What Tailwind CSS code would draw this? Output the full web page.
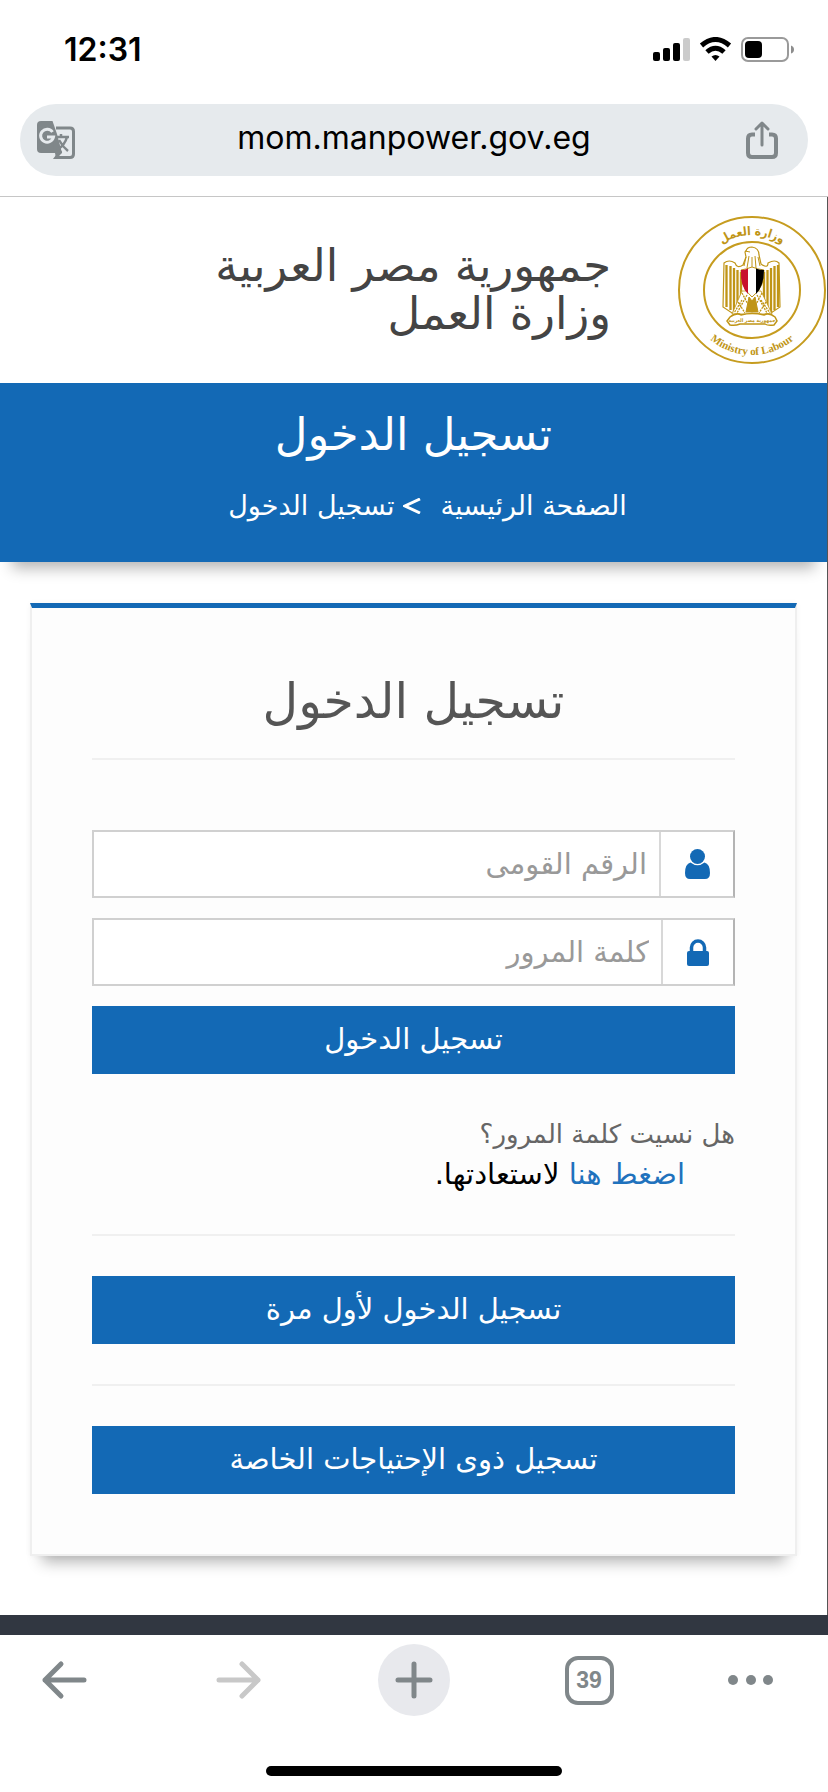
<!DOCTYPE html>
<html lang="ar">
<head>
<meta charset="utf-8">
<meta name="viewport" content="width=device-width, initial-scale=1">
<title>تسجيل الدخول</title>
<script src="https://cdn.jsdelivr.net/npm/@tailwindcss/browser@4"></script>
</head>
<body class="flex min-h-screen flex-col bg-white font-['Inter','DejaVu_Sans',sans-serif] text-black">

<!-- Status bar -->
<div class="flex h-[104px] items-center justify-between pr-8 pb-1 pl-16">
  <time class="text-[32px] leading-10 font-semibold">12:31</time>
  <svg class="h-[26px] w-[144px]" viewBox="0 0 144 26" aria-label="Signal, Wi-Fi, battery">
    <rect x="1" y="15" width="7" height="9" rx="2"/>
    <rect x="11" y="11" width="7" height="13" rx="2"/>
    <rect x="21" y="6" width="7" height="18" rx="2"/>
    <rect x="31" y="1" width="7" height="23" rx="2" fill="#cbcbcb"/>
    <path d="M49.500 8.500Q63.500-3.500 77.500 8.500" fill="none" stroke="#000" stroke-width="5"/>
    <path d="M55 15Q63.500 7.500 72 15" fill="none" stroke="#000" stroke-width="5"/>
    <path d="M59.500 19.500Q63.500 16.500 67.500 19.500L63.500 24Z"/>
    <rect x="90" y="1" width="46" height="23" rx="6" fill="none" stroke="#9a9a9a" stroke-width="2"/>
    <rect x="93" y="4" width="17" height="17" rx="4"/>
    <path d="M139 8.500Q142 9.500 142 12.500T139 16.500Z" fill="#8d8d8d"/>
  </svg>
</div>

<!-- Address bar -->
<div class="border-b border-[#c6c6c6] px-5 pb-5">
  <div class="flex h-[72px] items-center rounded-full bg-[#e6eaed] pr-[28px] pl-[16px]">
    <button type="button" aria-label="Translate">
      <svg class="size-10" viewBox="0 0 40 40">
        <path d="M5 1H16.500L21 14L26 33H5Q1 33 1 29V5Q1 1 5 1Z" fill="#80878a"/>
        <path d="M20 8H34Q37.500 8 37.500 11.500V34Q37.500 37.500 34 37.500H20L25 31" fill="none" stroke="#80878a" stroke-width="3"/>
        <path d="M18 9L26 33L20 38L19 33H17Z" fill="#80878a"/>
        <path d="M16.500 12A6.500 6.500 0 1 0 17.500 17H11" fill="none" stroke="#e6eaed" stroke-width="3"/>
        <path d="M20 17H33M25 14V17M31 17Q29 25 21 30M23 20Q27 27 32 31" fill="none" stroke="#80878a" stroke-width="2.500"/>
      </svg>
    </button>
    <span class="flex-1 pb-1 pl-2 text-center text-[32px] leading-10">mom.manpower.gov.eg</span>
    <button type="button" aria-label="Share">
      <svg class="h-10 w-[36px]" viewBox="0 0 36 40" fill="none" stroke="#80878a" stroke-width="4" stroke-linecap="round" stroke-linejoin="round">
        <path d="M11 14.500H8Q4 14.500 4 18.500V33Q4 37 8 37H28Q32 37 32 33V18.500Q32 14.500 28 14.500H25" stroke-linecap="butt"/>
        <path d="M18 25V4M12 9L18 3L24 9" stroke-width="3"/>
      </svg>
    </button>
  </div>
</div>

<main dir="rtl" class="flex-1 border-r border-[#555] bg-white font-['DejaVu_Sans',sans-serif]">
  <!-- Ministry header -->
  <header class="flex h-[186px] items-center gap-[66px]">
    <svg class="size-[150px] shrink-0" viewBox="0 0 150 150" aria-label="Ministry of Labour">
      <defs>
        <path id="arcTop" d="M20 75A55 55 0 0 1 130 75"/>
        <path id="arcBottom" d="M10 75A65 65 0 0 0 140 75"/>
      </defs>
      <g fill="none" stroke="#c69c1f" stroke-width="2">
        <circle cx="75" cy="75" r="73"/>
        <circle cx="75" cy="75" r="48"/>
      </g>
      <g fill="#c09516" font-weight="700">
        <text direction="rtl" font-family="DejaVu Sans Condensed, DejaVu Sans" font-size="12" text-anchor="middle"><textPath href="#arcTop" startOffset="50%">وزارة العمل</textPath></text>
        <text direction="ltr" font-family="Liberation Serif" font-size="11" text-anchor="middle"><textPath href="#arcBottom" startOffset="50%">Ministry of Labour</textPath></text>
      </g>
      <!-- Eagle of Saladin -->
      <g stroke="#c09516" fill="#fff">
        <path d="M69 36Q70 32 75 32Q82 33 82 40L84 49Q91 54 91 48Q98 44 102 48L103 92L91 100L75 98L58 100L46 92L47 48Q52 44 58 48Q60 54 66 50L69 42L68 37Z" stroke-width="1.200"/>
        <path d="M49.500 50V92M53.500 51V95M57 53V98M60.500 55V98M64 57V94M87 57V94M90.500 55V98M94 53V98M97.500 51V95M101 50V92" stroke-width="2.300"/>
        <path d="M69 42L67 51M72 41L70 53M75 42V53M78 41L79 53M81 42L83 51M68 36L73 37" fill="none"/>
        <path d="M65 76L55 99H95L84 76Z" stroke-width=".8"/>
        <path d="M65 78L75 97M61 87L68 98M85 78L75 97M89 87L82 98M70 80L60 98M80 80L90 98M65 85L57 98M84 85L93 98" fill="none" stroke-width="1.300" stroke-dasharray="2 1"/>
        <path d="M72 82L69 97H81L78 82L75 86Z" fill="#c09516"/>
        <path d="M64 55Q70 54 75 52Q80 54 87 55Q88 72 75 82Q63 72 64 55Z"/>
        <path d="M64 55Q68 55 71 53.500V79Q63 71 64 55Z" fill="#c8102e" stroke="none"/>
        <path d="M79 53.500Q83 55 87 55Q87 71 79 79Z" fill="#000" stroke="none"/>
        <path d="M53 102Q60 97 64 100Q75 97 87 100Q92 97 98 102L100 106L97 110Q91 111 88 109H63Q58 111 53 110L50 106Z" stroke-width="1.500"/>
        <text x="75" y="107" direction="rtl" font-family="DejaVu Sans Condensed, DejaVu Sans" font-size="5" font-weight="700" text-anchor="middle" fill="#c09516" stroke="none">جمهورية مصر العربية</text>
      </g>
    </svg>
    <p class="text-[45px] leading-[48px] text-[#444]">جمهورية مصر العربية<br>وزارة العمل</p>
  </header>

  <!-- Page title -->
  <section class="flex h-[179px] flex-col items-center bg-[#1369b5] pt-6 text-white shadow-[0_18px_14px_-12px_rgba(0,0,0,0.3)]">
    <h1 class="text-[45px] leading-[56px]">تسجيل الدخول</h1>
    <nav class="mt-5 flex items-center pl-7 text-[27px] leading-[46px]">
      <a href="#">الصفحة الرئيسية</a>
      <svg class="ms-5 me-2 h-4 w-[18px]" viewBox="0 0 18 16" fill="none" stroke="#fff" stroke-width="3"><path d="M17 1L2 8L17 15"/></svg>
      <span>تسجيل الدخول</span>
    </nav>
  </section>

  <!-- Login card -->
  <section class="mx-[30px] mt-[41px] border-2 border-t-[5px] border-[#efefef] border-t-[#1369b5] bg-[#fdfdfd] px-[60px] pt-[62px] pb-[60px] shadow-[0_18px_14px_-12px_rgba(0,0,0,0.3),0_0_6px_rgba(0,0,0,0.04)]">
    <h2 class="border-b-2 border-[#f0f0f0] pb-6 text-center text-[49px] leading-[64px] text-[#555]">تسجيل الدخول</h2>

    <form class="mt-[70px] flex flex-col gap-5 text-[29px]">
      <div class="flex h-[68px] border-2 border-[#d0d0d0] border-r-[#b4b4b4] bg-white">
        <label for="nid" aria-label="الرقم القومى" class="flex w-[74px] items-center justify-center border-l-2 border-[#d8d8d8]">
          <svg class="h-[30px] w-[25px]" viewBox="0 0 25 30" fill="#1369b5"><circle cx="12.500" cy="7.500" r="7.500"/><path d="M5.500 13.500Q12.500 19 19.500 13.500Q25 15 25 24Q25 30 20 30H5Q0 30 0 24Q0 15 5.500 13.500Z"/></svg>
        </label>
        <input id="nid" type="text" placeholder="الرقم القومى" class="min-w-0 flex-1 px-3 leading-[60px] outline-none placeholder:text-[#999]">
      </div>
      <div class="flex h-[68px] border-2 border-[#d0d0d0] border-r-[#b4b4b4] bg-white">
        <label for="pwd" aria-label="كلمة المرور" class="flex w-[72px] items-center justify-center border-l-2 border-[#d8d8d8]">
          <svg class="h-[27px] w-[22px]" viewBox="0 0 22 27"><rect y="12" width="22" height="15" rx="2" fill="#1369b5"/><path d="M4.500 13V8.500A6.500 6.500 0 0 1 17.500 8.500V13" fill="none" stroke="#1369b5" stroke-width="3.500"/></svg>
        </label>
        <input id="pwd" type="password" placeholder="كلمة المرور" class="min-w-0 flex-1 px-3 leading-[60px] outline-none placeholder:text-[#999]">
      </div>
      <button type="submit" class="h-[68px] bg-[#1369b5] text-white">تسجيل الدخول</button>
    </form>

    <div class="mt-10 border-b-2 border-[#f0f0f0] pb-10 leading-10">
      <p class="text-[26px] text-[#666]">هل نسيت كلمة المرور؟</p>
      <p class="pr-[50px] text-[29px]"><a href="#" class="text-[#1f72bd]">اضغط هنا</a> لاستعادتها.</p>
    </div>

    <div class="border-b-2 border-[#f0f0f0] py-10">
      <button type="button" class="h-[68px] w-full bg-[#1369b5] text-[29px] text-white">تسجيل الدخول لأول مرة</button>
    </div>
    <button type="button" class="mt-10 h-[68px] w-full bg-[#1369b5] text-[29px] text-white">تسجيل ذوى الإحتياجات الخاصة</button>
  </section>
</main>

<div class="h-5 bg-[#313741]"></div>

<!-- Browser toolbar -->
<nav class="flex flex-col items-center pt-2 pb-4">
  <div class="flex h-[74px] w-full items-center justify-between px-7 text-[#80878a]">
    <button type="button" aria-label="Back" class="flex w-[72px] justify-center">
      <svg class="h-10 w-[46px]" viewBox="0 0 46 40" fill="none" stroke="currentColor" stroke-width="5" stroke-linecap="round" stroke-linejoin="round"><path d="M43 20H4M20 4L4 20L20 36"/></svg>
    </button>
    <button type="button" aria-label="Forward" disabled class="flex w-[72px] justify-center text-[#c8c8c8]">
      <svg class="h-10 w-[46px]" viewBox="0 0 46 40" fill="none" stroke="currentColor" stroke-width="5" stroke-linecap="round" stroke-linejoin="round"><path d="M3 20H42M26 4L42 20L26 36"/></svg>
    </button>
    <button type="button" aria-label="New tab" class="flex size-[72px] items-center justify-center rounded-full bg-[#e8e9ed]">
      <svg class="size-10" viewBox="0 0 40 40" fill="none" stroke="currentColor" stroke-width="5" stroke-linecap="round"><path d="M20 4V36M4 20H36"/></svg>
    </button>
    <button type="button" aria-label="39 open tabs" class="flex w-[72px] justify-center">
      <span class="flex size-[49px] items-center justify-center rounded-[13px] border-4 border-[#80878a] font-['Liberation_Sans',sans-serif] text-[23px] font-bold">39</span>
    </button>
    <button type="button" aria-label="More" class="flex w-[72px] justify-start">
      <svg class="h-10 w-[46px]" viewBox="0 0 46 40" fill="currentColor"><circle cx="5" cy="20" r="5"/><circle cx="23" cy="20" r="5"/><circle cx="40" cy="20" r="5"/></svg>
    </button>
  </div>
  <div class="mt-[49px] h-[10px] w-[296px] rounded-full bg-black"></div>
</nav>
</body>
</html>
